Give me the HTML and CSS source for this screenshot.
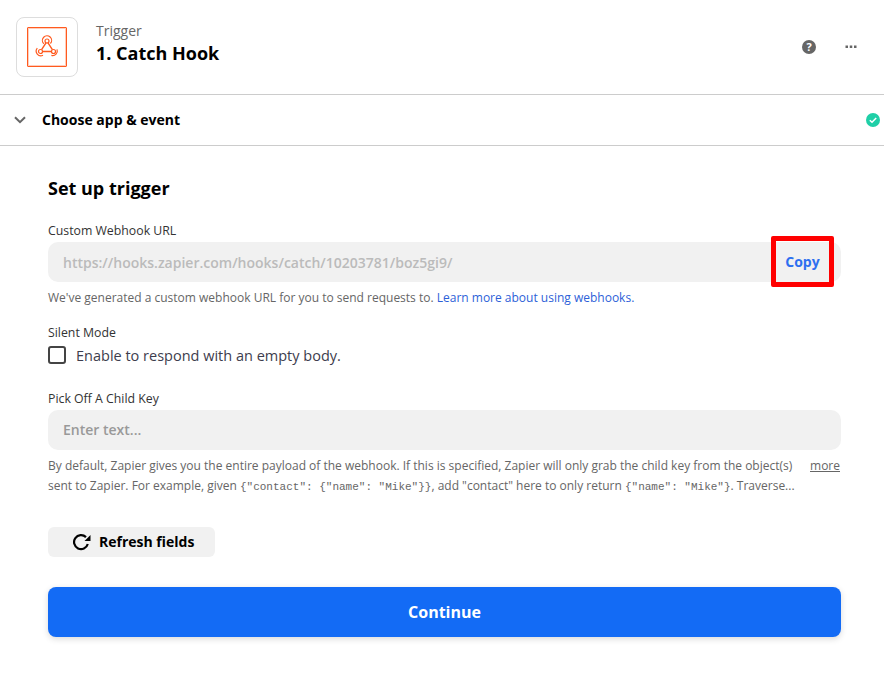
FILE: index.html
```html
<!DOCTYPE html>
<html lang="en">
<head>
<meta charset="utf-8">
<title>Catch Hook</title>
<link rel="stylesheet" href="styles.css">
</head>
<body>
<header class="head">
  <div class="logo-box">
    <div class="logo">
      <svg width="30" height="30" viewBox="0 0 30 30" fill="none" stroke="#ff5a1f" stroke-width="1.2">
        <circle cx="15" cy="9" r="2"/>
        <circle cx="8.5" cy="19.5" r="2"/>
        <circle cx="21.5" cy="19.5" r="2"/>
        <path d="M14 10.8 L9.6 17.7 M10.5 19.5 H19.5 M16 10.8 L20.4 17.7" stroke-width="1.4"/>
        <path d="M11.8 11.7 A4.6 4.6 0 1 1 18.4 11.5"/>
        <path d="M11 23.2 A4.6 4.6 0 0 1 5.3 16.2"/>
        <path d="M19.4 23.4 A4.6 4.6 0 0 0 25 17.4"/>
      </svg>
    </div>
  </div>
  <div class="titles">
    <div class="kicker">Trigger</div>
    <div class="title">1. Catch Hook</div>
  </div>
  <div class="head-actions">
    <svg class="help" width="14" height="14" viewBox="0 0 14 14"><circle cx="7" cy="7" r="7" fill="#666"/><text x="7" y="11" text-anchor="middle" class="help-q">?</text></svg>
    <svg class="dots" width="12" height="4" viewBox="0 0 12 4" fill="#666"><rect x="0.5" y="0.5" width="2.5" height="2.5"/><rect x="4.75" y="0.5" width="2.5" height="2.5"/><rect x="9" y="0.5" width="2.5" height="2.5"/></svg>
  </div>
</header>
<section class="step">
  <svg class="chev" width="12" height="8" viewBox="0 0 12 8" fill="none" stroke="#666" stroke-width="2"><path d="M1 1.2 L6 6.2 L11 1.2"/></svg>
  <div class="step-name">Choose app &amp; event</div>
  <svg width="14" height="14" viewBox="0 0 14 14"><circle cx="7" cy="7" r="7" fill="#1fcfa7"/><path d="M3.8 7.2 L6 9.2 L10.2 5" fill="none" stroke="#fff" stroke-width="1.5"/></svg>
</section>
<main class="form">
  <h2 class="form-title">Set up trigger</h2>
  <label class="label">Custom Webhook URL</label>
  <div class="field url">
    <span class="url-text">https://hooks.zapier.com/hooks/catch/10203781/boz5gi9/</span>
    <span class="copy-mark"><span class="copy">Copy</span></span>
  </div>
  <p class="help-text one">We've generated a custom webhook URL for you to send requests to. <a class="link">Learn more about using webhooks.</a></p>
  <label class="label silent">Silent Mode</label>
  <div class="check-row"><span class="check"></span><span class="check-label">Enable to respond with an empty body.</span></div>
  <label class="label pick">Pick Off A Child Key</label>
  <div class="field placeholder">Enter text...</div>
  <div class="desc">
    <p class="desc-text">By default, Zapier gives you the entire payload of the webhook. If this is specified, Zapier will only grab the child key from the object(s) sent to Zapier. For example, given <code>{"contact": {"name": "Mike"}}</code>, add "contact" here to only return <code>{"name": "Mike"}</code>. Traverse...</p>
    <a class="more">more</a>
  </div>
  <button class="refresh">
    <svg width="18" height="18" viewBox="0 0 18 18" fill="none" stroke="#000" stroke-width="2.2"><path d="M14.8 11 A7 7 0 1 1 13 4.1"/><path d="M17.5 2 V8 H11.5 Z" fill="#000" stroke="none"/></svg>
    <span>Refresh fields</span>
  </button>
  <button class="continue">Continue</button>
</main>
</body>
</html>
```
FILE: styles.css
```css
* { box-sizing: border-box; }
html, body { margin: 0; padding: 0; }
body { width: 884px; height: 684px; background: #fff; font-family: "Open Sans", sans-serif; color: #000; overflow: hidden; }
p { margin: 0; }
.head { height: 95px; border-bottom: 1px solid #ccc; display: flex; align-items: center; padding: 0 27px 0 16px; }
.logo-box { width: 62px; height: 60px; border: 1px solid #ddd; border-radius: 8px; display: flex; align-items: center; justify-content: center; }
.logo { width: 40px; height: 40px; border: 1px solid #ff5a1f; box-shadow: inset 0 0 0 1px rgba(255,90,31,.3); display: flex; align-items: center; justify-content: center; border-radius: 1px; }
.titles { margin-left: 18px; flex: 1; margin-top: -7px; }
.kicker { font-size: 14px; line-height: 19px; color: #666; }
.title { font-size: 18px; line-height: 26px; font-weight: 700; color: #000; }
.head-actions { display: flex; align-items: center; gap: 29px; }
.help-q { font: 700 11px "Open Sans", sans-serif; fill: #fff; }
.step { height: 51px; border-bottom: 1px solid #ccc; display: flex; align-items: center; padding: 0 4px 0 14px; }
.chev { flex: none; }
.step-name { flex: 1; margin-left: 16px; font-size: 14px; line-height: 18px; margin-top: -1px; font-weight: 700; color: #000; }
.form { padding: 29px 43px 0 48px; }
.form-title { margin: 0; font-size: 18px; line-height: 26px; font-weight: 700; color: #000; }
.label { display: block; font-size: 12.3px; line-height: 16px; font-weight: 400; color: #333; }
.form-title + .label { margin-top: 22px; }
.field { height: 40px; background: #f1f1f1; border-radius: 10px; font-size: 14px; display: flex; align-items: center; padding-left: 15px; font-weight: 600; }
.url { margin-top: 3px; position: relative; color: #bbb; }
.url-text { flex: 1; }
.copy-mark { position: absolute; left: 723px; top: -6px; width: 63px; height: 51px; border: 5px solid #f00; border-radius: 2px; display: flex; align-items: center; justify-content: center; }
.copy { color: #2d6ff0; font-size: 14px; font-weight: 700; }
.help-text { font-size: 12px; line-height: 18px; color: #666; }
.one { margin-top: 7px; }
.link { color: #2d5fd8; }
.silent { margin-top: 18px; }
.check-row { display: flex; align-items: center; margin-top: 3px; height: 22px; }
.check { width: 18px; height: 18px; border: 2px solid #444; border-radius: 3px; background: #fff; }
.check-label { margin-left: 10px; font-size: 14.5px; font-weight: 400; color: #3d3d4d; }
.pick { margin-top: 25px; }
.placeholder { margin-top: 3px; color: #999; padding-bottom: 1px; }
.desc { display: flex; gap: 14px; margin-top: 6px; padding-right: 1px; }
.desc-text { flex: 1; font-size: 12px; line-height: 20px; color: #666; }
code { font-family: "Liberation Mono", monospace; font-size: 11px; line-height: 1; color: #666; }
.more { font-size: 12px; line-height: 20px; color: #666; text-decoration: underline; }
.refresh { display: flex; align-items: center; gap: 8px; width: 167px; height: 30px; margin-top: 31px; padding: 0 0 1px 25px; border: 0; border-radius: 6px; background: #f1f1f1; font: 700 14px "Open Sans", sans-serif; color: #000; }
.continue { display: block; width: 793px; height: 50px; margin-top: 30px; border: 0; border-radius: 8px; background: #136bf5; color: #fff; font: 700 16px "Open Sans", sans-serif; box-shadow: 0 2px 6px rgba(0,0,0,.15); }
```
